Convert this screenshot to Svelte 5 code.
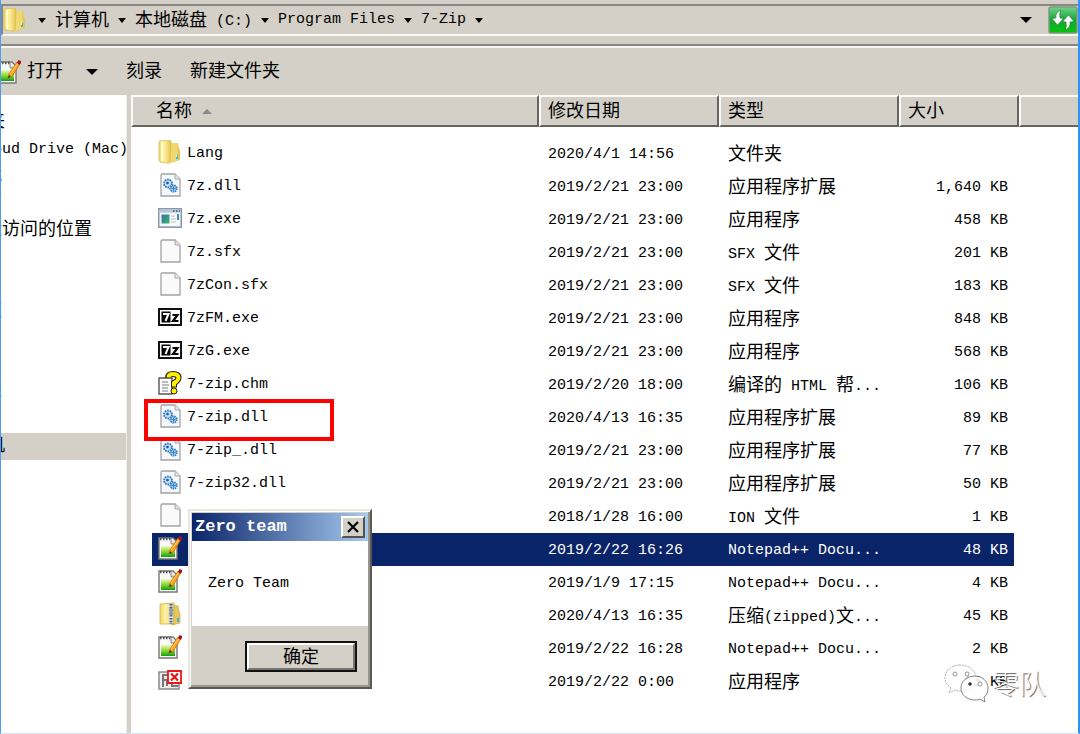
<script>
  const path = ['计算机', '本地磁盘 (C:)', 'Program Files', '7-Zip'];

  const groups = [
    { title: '收藏夹', items: ['iCloud Drive (Mac)', '下载', '桌面', '最近访问的位置'] },
    { title: '', items: ['视频', '图片', '文档', '音乐'] }
  ];

  const files = [
    { icon: 'folder', name: 'Lang', date: '2020/4/1 14:56', type: '文件夹', size: '' },
    { icon: 'dll', name: '7z.dll', date: '2019/2/21 23:00', type: '应用程序扩展', size: '1,640 KB' },
    { icon: 'exe', name: '7z.exe', date: '2019/2/21 23:00', type: '应用程序', size: '458 KB' },
    { icon: 'file', name: '7z.sfx', date: '2019/2/21 23:00', type: 'SFX 文件', size: '201 KB' },
    { icon: 'file', name: '7zCon.sfx', date: '2019/2/21 23:00', type: 'SFX 文件', size: '183 KB' },
    { icon: 'sevenzip', name: '7zFM.exe', date: '2019/2/21 23:00', type: '应用程序', size: '848 KB' },
    { icon: 'sevenzip', name: '7zG.exe', date: '2019/2/21 23:00', type: '应用程序', size: '568 KB' },
    { icon: 'chm', name: '7-zip.chm', date: '2019/2/20 18:00', type: '编译的 HTML 帮...', size: '106 KB' },
    { icon: 'dll', name: '7-zip.dll', date: '2020/4/13 16:35', type: '应用程序扩展', size: '89 KB', marked: true },
    { icon: 'dll', name: '7-zip_.dll', date: '2019/2/21 23:00', type: '应用程序扩展', size: '77 KB' },
    { icon: 'dll', name: '7-zip32.dll', date: '2019/2/21 23:00', type: '应用程序扩展', size: '50 KB' },
    { icon: 'file', name: '', date: '2018/1/28 16:00', type: 'ION 文件', size: '1 KB' },
    { icon: 'notepad', name: '', date: '2019/2/22 16:26', type: 'Notepad++ Docu...', size: '48 KB', selected: true },
    { icon: 'notepad', name: '', date: '2019/1/9 17:15', type: 'Notepad++ Docu...', size: '4 KB' },
    { icon: 'zip', name: '', date: '2020/4/13 16:35', type: '压缩(zipped)文...', size: '45 KB' },
    { icon: 'notepad', name: '', date: '2019/2/22 16:28', type: 'Notepad++ Docu...', size: '2 KB' },
    { icon: 'uninstall', name: '', date: '2019/2/22 0:00', type: '应用程序', size: '15 KB' }
  ];

  // Splits a string into Chinese and Latin runs, so each gets its own size.
  const runs = (s) => s.match(/[\u4e00-\u9fff]+|[^\u4e00-\u9fff]+/g) ?? [];
  const isHan = (s) => /[\u4e00-\u9fff]/.test(s);
</script>

{#snippet text(s)}{#each runs(s) as r}<span class={isHan(r) ? 'han' : 'latin'}>{r}</span>{/each}{/snippet}

{#snippet icon(kind)}
  <svg class="icon" viewBox="0 0 24 24" width="24" height="24" aria-hidden="true">
    {#if kind === 'folder'}
      <path d="M12 4l8-1 1 6 1 1v10l-9 3z" fill="#e6c650" />
      <path d="M12 3l7 0 1 17-8 3z" fill="#f0d873" />
      <path d="M1 2Q1 1 2 1L11 0Q13 0 13 2L12 22Q11 24 9 23L2 22Q1 21 1 20z" fill="url(#fold)" stroke="#d8b845" stroke-width=".7" />
      <path d="M4 2v19" stroke="#fffbd0" stroke-width="2" />
      <path d="M18 15h2v4h-2z" fill="#35b8e0" /><path d="M18 15h1v2h-1z" fill="#d8f6ff" />
    {:else if kind === 'file' || kind === 'dll'}
      <path d="M4 1h13l5 5v17H3V2z" fill={kind === 'dll' ? '#f4f8fc' : '#fafafa'} stroke="#a3a3a3" stroke-width="1.3" />
      <path d="M17 1v5h5" fill="#e8e8e8" stroke="#a8a8a8" />
      {#if kind === 'dll'}
        <circle cx="10" cy="10.500" r="4" fill="#bcdcf3" stroke="#2e76bd" stroke-width="1.800" stroke-dasharray="1.600 .9" />
        <circle cx="9.500" cy="10" r="1.300" fill="#28567d" />
        <circle cx="15.500" cy="15.500" r="3.200" fill="#a9d2f0" stroke="#2f7cc4" stroke-width="1.800" stroke-dasharray="1.500 .7" />
        <path d="M15.500 13.500v4M13.500 15.500h4" stroke="#3a7fbe" />
      {/if}
    {:else if kind === 'exe'}
      <path d="M.7 2.700h22.600v18.600H.7z" fill="#e4ebf2" stroke="#8996a6" stroke-width="1.400" />
      <path d="M1.500 3.500h21v3h-21z" fill="#b7c6d8" />
      <path d="M15 5h1.500M18 5h1.500M21 5h1" stroke="#35557e" stroke-width="1.500" />
      <path d="M2.500 7.500h19v12h-19z" fill="#fbfcfd" />
      <path d="M3.500 8.500h8v9h-8z" fill="url(#program)" />
      <path d="M13 10h4M13 13h5M13 16h5" stroke="#b5bdc8" /><path d="M19 8h2v6h-2z" fill="#3f8fb0" />
    {:else if kind === 'sevenzip'}
      <path d="M1 4h22v16H1z" fill="#fff" stroke="#111" stroke-width="2" />
      <path d="M3.500 6.500h9v11h-9z" fill="#000" />
      <path d="M5 9h5.500L7.500 16" fill="none" stroke="#fff" stroke-width="2" />
      <path d="M14.500 10h5l-4.500 6h5.500" fill="none" stroke="#000" stroke-width="2.200" />
    {:else if kind === 'chm'}
      <path d="M1 7h13v16H1z" fill="#fff" stroke="#555" stroke-width="1.400" />
      <path d="M4 11h6M4 14h7M4 17h6M4 20h6" stroke="#777" />
      <path d="M10 7Q10 3 15 3Q21 3 20.500 7Q20 10 16 12V16.500" fill="none" stroke="#222" stroke-width="6" />
      <path d="M10.500 6.500Q10.500 3 15 3Q20.500 3 20.500 7Q20 10 16 12V15.500" fill="none" stroke="#ffee00" stroke-width="4" />
      <circle cx="16" cy="20" r="3" fill="#ffee00" stroke="#222" />
    {:else if kind === 'notepad'}
      <path d="M1 2h14l4 4v17H1z" fill="#fafafa" stroke="#777" stroke-width="1.400" />
      <path d="M3 10h14v11H3z" fill="url(#green)" />
      <path d="M2 3h12" stroke="#555" stroke-width="2.400" stroke-dasharray="1.500 1.500" />
      <path d="M13 3v5h5" fill="#ddd" stroke="#888" />
      <path d="M11 18l1-4L20 2l3 1.500-8 13z" fill="#ffa51f" stroke="#c66c08" stroke-width=".8" />
      <path d="M13 14L21 3" stroke="#ffd35b" /><path d="M20 3l1.500-3 2.500 1v2l-1.500 2z" fill="#a3122b" />
      <path d="M11 18l1-3 2 2z" fill="#333" />
    {:else if kind === 'zip'}
      <path d="M13 3l7 1 1 6 1 1v10l-8 2z" fill="#e7c75b" stroke="#c9a53a" stroke-width=".7" />
      <path d="M2 2l14-1v21l-14 0z" fill="url(#fold)" stroke="#cfae47" stroke-width=".8" />
      <path d="M13 2v19" stroke="#e8ebf0" stroke-width="4" />
      <path d="M13 2v20" stroke="#355893" stroke-width="3" stroke-dasharray="1.400 1.400" />
      <path d="M12 6h2v7h-2z" fill="#a7b5c7" stroke="#47628d" stroke-width=".6" /><path d="M19 16h2v4h-2z" fill="#35b8e0" />
    {:else if kind === 'uninstall'}
      <path d="M1 4h20v17H1z" fill="#eee" stroke="#8b8b8b" stroke-width="1.500" />
      <path d="M5 19V7h6M5 12h5M9 18v-6h4M15 18h5M14 15v4" fill="none" stroke="#777" stroke-width="2" />
      <path d="M10 3h13v12H10z" fill="#fff" stroke="#ee1717" stroke-width="1.800" />
      <path d="M13 5.500l7 7M20 5.500l-7 7" stroke="#e31313" stroke-width="2.200" />
    {/if}
  </svg>
{/snippet}

<svg class="defs" width="0" height="0" aria-hidden="true">
  <defs>
    <linearGradient id="fold"><stop offset="0" stop-color="#f3d765" /><stop offset=".4" stop-color="#fff2a5" /><stop offset="1" stop-color="#e6c44e" /></linearGradient>
    <linearGradient id="program" x2="1" y2="1"><stop offset="0" stop-color="#2b74ad" /><stop offset="1" stop-color="#43b56a" /></linearGradient>
    <linearGradient id="green" x2="0" y2="1"><stop offset="0" stop-color="#f0fac0" /><stop offset=".5" stop-color="#8cd832" /><stop offset="1" stop-color="#13a013" /></linearGradient>
    <linearGradient id="refresh" x2="0" y2="1"><stop offset="0" stop-color="#72d38b" /><stop offset=".5" stop-color="#12a636" /><stop offset="1" stop-color="#06c50a" /></linearGradient>
  </defs>
</svg>

<div class="window">
  <header class="address">
    <div class="box">
      {@render icon('folder')}
      <nav class="crumbs" aria-label="路径">
        <i class="caret"></i>
        {#each path as p}
          <button class="crumb">{@render text(p)}</button><i class="caret"></i>
        {/each}
      </nav>
      <button class="drop" aria-label="展开"><i class="caret big"></i></button>
      <button class="refresh" aria-label="刷新">
        <svg viewBox="0 0 30 28" width="30" height="28">
          <rect x="1" y="1" width="28" height="26" rx="2" fill="url(#refresh)" stroke="#7e9a80" stroke-width="1.500" />
          <path d="M13 4Q7 7 8 12L4 12.500 9.500 19 15.500 12.500 12 12Q11 7 13 4z" fill="#fff" stroke="#28763a" stroke-width=".6" />
          <path d="M17 24Q23 21 22 16L26 15.500 20.500 9 14.500 15.500 18 16Q19 21 17 24z" fill="#fff" stroke="#28763a" stroke-width=".6" />
        </svg>
      </button>
    </div>
  </header>

  <div class="toolbar">
    <div class="tool-icon">{@render icon('notepad')}</div>
    <button class="open"><span>{@render text('打开')}</span><i class="caret big"></i></button>
    <button>{@render text('刻录')}</button>
    <button>{@render text('新建文件夹')}</button>
  </div>

  <div class="body">
    <nav class="side" aria-label="导航">
      {#each groups as g}
        <ul>
          {#if g.title}<li class="title">{@render text(g.title)}</li>{/if}
          {#each g.items as item}<li>{@render text(item)}</li>{/each}
        </ul>
      {/each}
      <ul><li class="title current">{@render text('计算机')}</li></ul>
    </nav>

    <main>
      <table>
        <colgroup><col class="c-name" /><col class="c-mid" /><col class="c-mid" /><col class="c-size" /><col /></colgroup>
        <thead>
          <tr>
            <th class="first">{@render text('名称')}<i class="sort"></i></th>
            <th>{@render text('修改日期')}</th>
            <th>{@render text('类型')}</th>
            <th>{@render text('大小')}</th>
            <th class="rest"></th>
          </tr>
        </thead>
        <tbody>
          <tr class="space"><td colspan="5"></td></tr>
          {#each files as f}
            <tr class:selected={f.selected}>
              <td class="name">
                <div class="entry">
                  {@render icon(f.icon)}<span>{@render text(f.name)}</span>
                  {#if f.marked}<i class="mark"></i>{/if}
                </div>
              </td>
              <td>{@render text(f.date)}</td>
              <td>{@render text(f.type)}</td>
              <td class="size">{@render text(f.size)}</td>
              <td class="blank"></td>
            </tr>
          {/each}
        </tbody>
      </table>
    </main>
  </div>

  <section class="dialog" role="dialog" aria-labelledby="dialog-title">
    <div class="titlebar">
      <h2 id="dialog-title">Zero team</h2>
      <button class="close" aria-label="关闭">
        <svg viewBox="0 0 14 12" width="14" height="12"><path d="M2 1l10 10M12 1L2 11" stroke="#000" stroke-width="2.200" /></svg>
      </button>
    </div>
    <p>{@render text('Zero Team')}</p>
    <footer><button class="ok">{@render text('确定')}</button></footer>
  </section>

  <div class="watermark">
    <svg viewBox="0 0 46 40" width="46" height="40" aria-hidden="true">
      <path d="M17 2C8 2 2 8 2 15c0 5 3 8 6 10l-2 5 6-3c2 1 4 1 7 1 8-1 14-6 14-13C33 8 26 2 17 2z" fill="#fff" fill-opacity=".85" stroke="#999" stroke-width=".8" stroke-dasharray="2 1" />
      <path d="M32 13c-8 0-14 5-14 12s6 12 14 12c2 0 4 0 5-1l5 3-1-5c3-2 4-5 4-9 0-7-6-12-13-12z" fill="#fff" fill-opacity=".85" stroke="#777" stroke-width=".9" />
      <g fill="#fff" stroke="#888" stroke-width=".9"><circle cx="12" cy="11" r="2" /><circle cx="24" cy="11" r="2" /><circle cx="37" cy="21" r="2" /></g>
      <circle cx="27" cy="21" r="1.800" fill="#333" />
    </svg>
    <span>零队</span>
  </div>
</div>

<style>
  :global(body) { margin: 0; background: #d4d0c8; }
  .defs { position: absolute; }
  .window {
    position: relative;
    box-sizing: border-box;
    min-height: 100vh;
    display: flex;
    flex-direction: column;
    overflow: hidden;
    border-left: 1px solid #4a9df0;
    border-right: 2px solid #2f94f5;
    border-bottom: 1px solid #d3e4f3;
    background: #d4d0c8;
    color: #000;
    font: 15px/20px "Liberation Mono", "Noto Sans CJK SC", monospace;
  }
  button { border: 0; padding: 0; background: none; color: inherit; font: inherit; }
  .latin { font-size: 15px; white-space: pre; }
  .han + .latin, .latin:has(+ .han) { vertical-align: 1px; }
  .han { font-family: "Noto Sans CJK SC", sans-serif; font-size: 18px; line-height: 20px; }
  .icon { display: block; flex: none; }

  .caret { display: block; flex: none; border: 4px solid transparent; border-top: 5px solid #000; border-bottom: 0; }
  .caret.big { border-width: 6px 6px 0; }

  .address { padding: 4px 0 8px; border-bottom: 2px solid #8a8885; box-shadow: 0 2px #f6f5f2; }
  .box {
    display: flex;
    align-items: center;
    height: 28px;
    border: 2px solid #8a8885;
    border-width: 2px 0 2px 2px;
    border-bottom-color: #f8f7f4;
  }
  .crumbs { display: flex; align-items: center; gap: 9px; flex: 1; padding-left: 11px; }
  .crumb { white-space: nowrap; }
  .drop { padding: 4px 16px; }
  .refresh svg { display: block; }

  .toolbar { display: flex; align-items: center; gap: 28px; height: 47px; padding-top: 2px; }
  .tool-icon { margin: 0 -22px 0 -4px; }
  .open { display: flex; align-items: center; gap: 23px; }

  .body { flex: 1; display: flex; }
  .side {
    width: 125px;
    flex: none;
    padding-top: 14px;
    overflow: hidden;
    background: #fff;
    border-right: 1px solid #eeece6;
  }
  ul { list-style: none; margin: 0 0 54px; padding: 0; }
  ul + ul { margin-bottom: 27px; }
  li { display: block; height: 27px; line-height: 28px; text-indent: -35px; white-space: nowrap; }
  .title { text-indent: -50px; }
  .current { background: #d4d0c8; }

  main { flex: 1; min-width: 0; margin-left: 4px; background: #fff; }
  table { width: 100%; table-layout: fixed; border-collapse: separate; border-spacing: 0; }
  .c-name { width: 408px; }
  .c-mid { width: 180px; }
  .c-size { width: 120px; }
  th {
    box-sizing: border-box;
    height: 32px;
    padding: 1px 7px 0;
    border: 2px solid;
    border-color: #fbfaf8 #66645f #66645f #fbfaf8;
    background: #d4d0c8;
    font-weight: 400;
    text-align: left;
  }
  .first { padding-left: 23px; }
  .rest { border-right: 0; }
  .sort { display: inline-block; margin-left: 10px; vertical-align: 3px; border: 5px solid transparent; border-top: 0; border-bottom: 5px solid #8a8885; }
  td { box-sizing: border-box; height: 33px; padding: 2px 0 0 9px; white-space: nowrap; overflow: hidden; }
  .space td { height: 10px; }
  .name { padding: 0 0 0 6px; border-left: 21px solid transparent; background-clip: padding-box; overflow: visible; }
  .entry { position: relative; display: flex; align-items: center; gap: 5px; height: 33px; }
  .entry .icon { margin-bottom: 3px; }
  .entry span { padding-top: 1px; }
  .size { padding-right: 6px; border-right: 5px solid transparent; background-clip: padding-box; text-align: right; }
  .selected td:not(.blank) { background-color: #0a246a; color: #fff; }
  .mark { position: absolute; z-index: 1; left: -14px; top: -2px; width: 182px; height: 34px; border: 4px solid #f00; }

  .dialog {
    position: absolute;
    z-index: 2;
    left: 187px;
    top: 509px;
    width: 176px;
    padding: 2px;
    border: 2px solid;
    border-color: #e9e6df #5a5854 #5a5854 #e9e6df;
    box-shadow: inset 1px 1px #fff, inset -2px -2px #99968f;
    background: #d4d0c8;
  }
  .titlebar { display: flex; align-items: center; justify-content: space-between; height: 28px; padding: 0 3px; background: linear-gradient(90deg, #0a246a, #a6caf0); }
  h2 { margin: 0; color: #fff; font-size: 17px; line-height: 28px; white-space: nowrap; }
  .close, .ok { border: 2px solid; border-color: #fff #55534f #55534f #fff; background: #d4d0c8; }
  .close { display: grid; place-items: center; width: 24px; height: 22px; }
  .dialog p { margin: 0; padding: 33px 16px 32px; background: #fff; }
  .dialog footer { display: flex; justify-content: flex-end; padding: 15px 11px 13px; }
  .ok { width: 112px; height: 31px; outline: 2px solid #111; outline-offset: -2px; border-width: 4px; border-color: #fff #77756f #77756f #fff; line-height: 20px; }

  .watermark { position: absolute; z-index: 2; right: 32px; bottom: 30px; display: flex; align-items: center; gap: 3px; color: #fff; }
  .watermark span { font: 300 27px/36px "Noto Sans CJK SC", sans-serif; text-shadow: 1px 1px 1px #555; }
</style>
